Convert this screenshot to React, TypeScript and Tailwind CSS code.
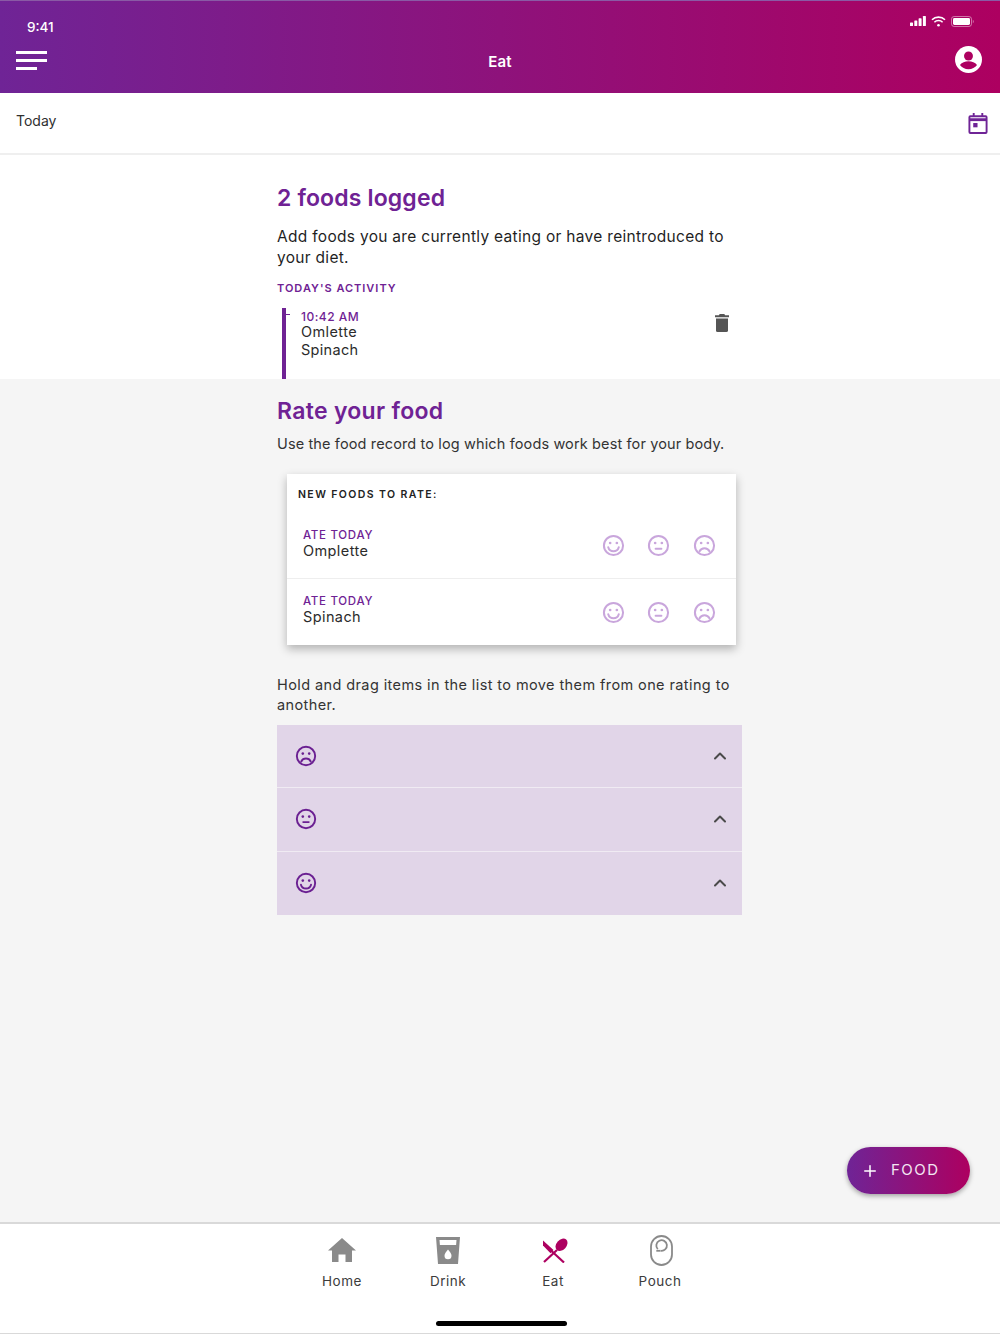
import React from "react";
import { ChevronUp, Plus } from "lucide-react";

const Face = ({ mood, className }: { mood: "happy" | "neutral" | "sad"; className: string }) => {
  return (
    <svg viewBox="0 0 24 24" fill="none" stroke="currentColor" strokeWidth="2.1" strokeLinecap="round" className={className}>
      <circle cx="12" cy="12" r="10" />
      <circle cx="8.500" cy="9.400" r="1.400" fill="currentColor" stroke="none" />
      <circle cx="15.500" cy="9.400" r="1.400" fill="currentColor" stroke="none" />
      {mood === "happy" && <path d="M6.500 13.800a5.700 5.700 0 0 0 11 0" />}
      {mood === "neutral" && <path d="M9 15.400h6" />}
      {mood === "sad" && <path d="M6.800 18a5.800 5.800 0 0 1 10.400 0" />}
    </svg>
  );
};

const RateRow = ({ name, last }: { name: string; last?: boolean }) => {
  return (
    <div className={`flex h-[66px] items-center pl-[16px] ${last ? "" : "border-b border-[#eeeeee]"}`}>
      <div className="flex-1 -mt-[6px]">
        <div className="text-[11.5px] leading-[16px] font-medium tracking-[0.7px] text-[#6f2294]">ATE TODAY</div>
        <div className="text-[14.5px] leading-[16px] tracking-[0.4px] text-[#2b2b2b]">{name}</div>
      </div>
      <div className="flex items-center text-[#c9a6dc]">
        <Face mood="happy" className="w-[23px] h-[23px] mr-[22px]" />
        <Face mood="neutral" className="w-[23px] h-[23px] mr-[23px]" />
        <Face mood="sad" className="w-[23px] h-[23px] mr-[20px]" />
      </div>
    </div>
  );
};

const RatingBar = ({ mood, last }: { mood: "happy" | "neutral" | "sad"; last?: boolean }) => {
  return (
    <div className={`flex h-[63.33px] items-center justify-between bg-[#e1d5e8] pl-[18px] pr-[12px] ${last ? "" : "border-b border-[#f0ebf3]"}`}>
      <Face mood={mood} className="w-[22px] h-[22px] text-[#6b2092]" />
      <ChevronUp size={20} strokeWidth={2.4} className="text-[#4a4a4a]" />
    </div>
  );
};

const NavItem = ({ label, icon, width }: { label: string; icon: React.ReactNode; width: string }) => {
  return (
    <div className={`flex flex-col items-center ${width}`}>
      <div className="flex h-[32px] items-center justify-center">{icon}</div>
      <div className="mt-[6px] text-[13.5px] leading-[18px] tracking-[0.5px] text-[#3c3c3c]">{label}</div>
    </div>
  );
};

export default function App() {
  return (
    <div className="relative flex h-[1334px] w-[1000px] flex-col overflow-hidden bg-[#f5f5f5] font-['Inter',sans-serif]">
      {/* header */}
      <header className="h-[93px] shrink-0 bg-linear-to-r/srgb from-[#6f2496] to-[#ad0060] border-t border-[#8a5aa5] text-white">
        <div className="flex h-[40px] items-center justify-between pl-[27px] pr-[26px]">
          <span className="text-[13.5px] font-medium mt-[12px]">9:41</span>
          <div className="flex items-center gap-[5px]">
            <svg width="16" height="10" viewBox="0 0 16 10" fill="white">
              <rect x="0" y="6.500" width="3" height="3.500" rx="0.600" />
              <rect x="4.300" y="4.500" width="3" height="5.500" rx="0.600" />
              <rect x="8.600" y="2.300" width="3" height="7.700" rx="0.600" />
              <rect x="12.900" y="0" width="3" height="10" rx="0.600" />
            </svg>
            <svg width="15" height="11" viewBox="0 0 15 11" fill="none" stroke="white" strokeWidth="1.600">
              <path d="M1 3.800a9.200 9.200 0 0 1 13 0" />
              <path d="M3.400 6.200a5.800 5.800 0 0 1 8.200 0" />
              <circle cx="7.500" cy="9.300" r="1.300" fill="white" stroke="none" />
            </svg>
            <svg width="23" height="11" viewBox="0 0 23 11" fill="none">
              <rect x="0.500" y="0.500" width="20" height="10" rx="2.600" stroke="white" strokeOpacity="0.450" />
              <rect x="2" y="2" width="17" height="7" rx="1.400" fill="white" />
              <path d="M21.800 3.800v3.400c.6-.2 1-.9 1-1.700s-.4-1.500-1-1.700z" fill="white" fillOpacity="0.450" />
            </svg>
          </div>
        </div>
        <div className="relative flex h-[42px] items-center justify-center">
          <span className="mt-px text-[15px] font-semibold tracking-[0.2px]">Eat</span>
          <div className="absolute left-[16px] top-[10px] flex flex-col gap-[5px]">
            <div className="h-[3px] w-[31px] bg-white" />
            <div className="h-[3px] w-[31px] bg-white" />
            <div className="h-[3px] w-[21px] bg-white" />
          </div>
          <svg viewBox="0 0 26 26" className="absolute right-[18px] top-[5px] h-[27px] w-[27px]">
            <circle cx="13" cy="13" r="13" fill="white" />
            <circle cx="13" cy="9.600" r="4.300" fill="#ad0060" />
            <path d="M4.800 18.400c1.800-2.600 4.800-3.700 8.200-3.700s6.400 1.100 8.200 3.700c-1.800 2.600-4.800 4-8.200 4s-6.400-1.400-8.200-4z" fill="#ad0060" />
          </svg>
        </div>
      </header>

      {/* date bar */}
      <div className="flex h-[62px] shrink-0 items-center justify-between border-b-2 border-[#efefef] bg-white pl-[16px] pr-[12px]">
        <span className="-mt-[6px] text-[14px] text-[#2f2f2f]">Today</span>
        <svg viewBox="0 0 20 22" className="h-[21px] w-[20px] text-[#6f2496]" fill="none" stroke="currentColor" strokeWidth="2">
          <rect x="1" y="3.400" width="18" height="17.600" rx="1" />
          <path d="M1 7h18" strokeWidth="3" />
          <path d="M5.500 0v4M14.500 0v4" />
          <rect x="5" y="10.500" width="4.500" height="4.500" fill="currentColor" stroke="none" />
        </svg>
      </div>

      {/* logged foods */}
      <section className="h-[224px] shrink-0 bg-white">
        <div className="ml-[277px] w-[465px]">
          <h1 className="pt-[27px] text-[23px] leading-[32px] font-semibold tracking-[0.15px] text-[#6f2294]">2 foods logged</h1>
          <p className="mt-[12px] w-[460px] text-[15.5px] leading-[21px] tracking-[0.3px] text-[#1f1f1f]">
            Add foods you are currently eating or have reintroduced to your diet.
          </p>
          <h2 className="mt-[12px] text-[11px] leading-[16px] font-semibold tracking-[1px] text-[#6f2294]">TODAY'S ACTIVITY</h2>
          <div className="relative mt-[12px] ml-[5px] flex h-[71px] justify-between border-l-[4px] border-[#6f2294] pl-[15px] pt-px">
            <div className="absolute left-0 top-[6px] h-px w-[4px] bg-[#6f2294]" />
            <div>
              <div className="text-[12px] leading-[16px] font-medium tracking-[0.5px] text-[#6f2294]">10:42 AM</div>
              <div className="-mt-[2px] text-[14.5px] leading-[18px] tracking-[0.4px] text-[#2b2b2b]">Omlette</div>
              <div className="text-[14.5px] leading-[18px] tracking-[0.3px] text-[#2b2b2b]">Spinach</div>
            </div>
            <svg viewBox="0 0 14 18" className="mr-[13px] mt-[5px] h-[18px] w-[14px]" fill="#555555">
              <path d="M4.600 0h4.800l.6 1.200H14v2H0v-2h4z" />
              <path d="M1 4.400h12V16.400a1.600 1.600 0 0 1-1.600 1.600H2.600A1.600 1.600 0 0 1 1 16.400z" />
            </svg>
          </div>
        </div>
      </section>

      {/* rate your food */}
      <main className="flex-1">
        <div className="ml-[277px] w-[465px]">
          <h2 className="pt-[16px] text-[23px] leading-[32px] font-semibold tracking-[0.3px] text-[#6f2294]">Rate your food</h2>
          <p className="mt-[7px] text-[14.5px] leading-[20px] tracking-[0.13px] text-[#333333]">Use the food record to log which foods work best for your body.</p>
          <div className="mt-[20px] ml-[10px] w-[449px] bg-white shadow-[0_4px_9px_rgba(0,0,0,0.28)]">
            <div className="pl-[11px] pt-[13px] pb-[10px] text-[10.5px] leading-[16px] font-semibold tracking-[1.4px] text-[#222222]">NEW FOODS TO RATE:</div>
            <RateRow name="Omplette" />
            <RateRow name="Spinach" last />
          </div>
          <p className="mt-[30px] text-[14.5px] leading-[19.5px] tracking-[0.4px] text-[#333333]">
            Hold and drag items in the list to move them from one rating to another.
          </p>
          <div className="mt-[11px]">
            <RatingBar mood="sad" />
            <RatingBar mood="neutral" />
            <RatingBar mood="happy" last />
          </div>
        </div>
      </main>

      {/* add food button */}
      <button className="absolute right-[30px] top-[1147px] flex h-[47px] w-[123px] items-center rounded-full bg-linear-to-r/srgb from-[#6f2496] to-[#ad0060] pl-[14px] text-white shadow-[0_2px_5px_rgba(0,0,0,0.35)]">
        <Plus size={18} strokeWidth={2} />
        <span className="ml-[12px] text-[15px] tracking-[1.5px] text-[#f3e6f2]">FOOD</span>
      </button>

      {/* bottom nav */}
      <nav className="relative h-[112px] shrink-0 border-t-2 border-b border-[#d9d9d9] bg-white">
        <div className="ml-[289px] flex pt-[10px]">
          <NavItem
            label="Home"
            width="w-[106px]"
            icon={
              <svg viewBox="0 0 28 24" className="h-[24px] w-[28px]" fill="#8a8a8a">
                <path d="M14 0 0 12.600h4V24h6.500v-7.500h7V24H24V12.600h4z" />
              </svg>
            }
          />
          <NavItem
            label="Drink"
            width="w-[106px]"
            icon={
              <svg viewBox="0 0 24 27" className="h-[27px] w-[24px]" fill="#8a8a8a" fillRule="evenodd">
                <path d="M0 0h24l-2 27H2zM3.500 3l.4 5h16.200l.4-5zM12 12.500c-2 2.500-3.500 4.300-3.500 6.200a3.500 3.500 0 0 0 7 0c0-1.900-1.500-3.700-3.500-6.200z" />
              </svg>
            }
          />
          <NavItem
            label="Eat"
            width="w-[104px]"
            icon={
              <svg viewBox="0 0 26 25" className="ml-[4px] h-[25px] w-[26px]" fill="none" stroke="#ad0060">
                <path d="M2 24 15 12" strokeWidth="2.200" />
                <ellipse cx="19.500" cy="6.800" rx="5" ry="7" transform="rotate(42 19.500 6.800)" fill="#ad0060" stroke="none" />
                <path d="M1 2.600 11.500 12l-3 3.200L1 7.600z" fill="#ad0060" stroke="none" />
                <path d="M9.500 13 22 24.500" strokeWidth="2.200" />
              </svg>
            }
          />
          <NavItem
            label="Pouch"
            width="w-[110px]"
            icon={
              <svg viewBox="0 0 23 31" className="ml-[2px] h-[31px] w-[23px]" fill="none" stroke="#8a8a8a" strokeWidth="1.800">
                <rect x="1" y="1" width="21" height="29" rx="10.500" />
                <path d="M7.800 14.200a5.300 5.300 0 1 1 2.700 1.500" />
                <path d="M6.300 15.800h4" />
              </svg>
            }
          />
        </div>
        <div className="absolute bottom-[7px] left-[436px] h-[5px] w-[131px] rounded-full bg-black" />
      </nav>
    </div>
  );
}
